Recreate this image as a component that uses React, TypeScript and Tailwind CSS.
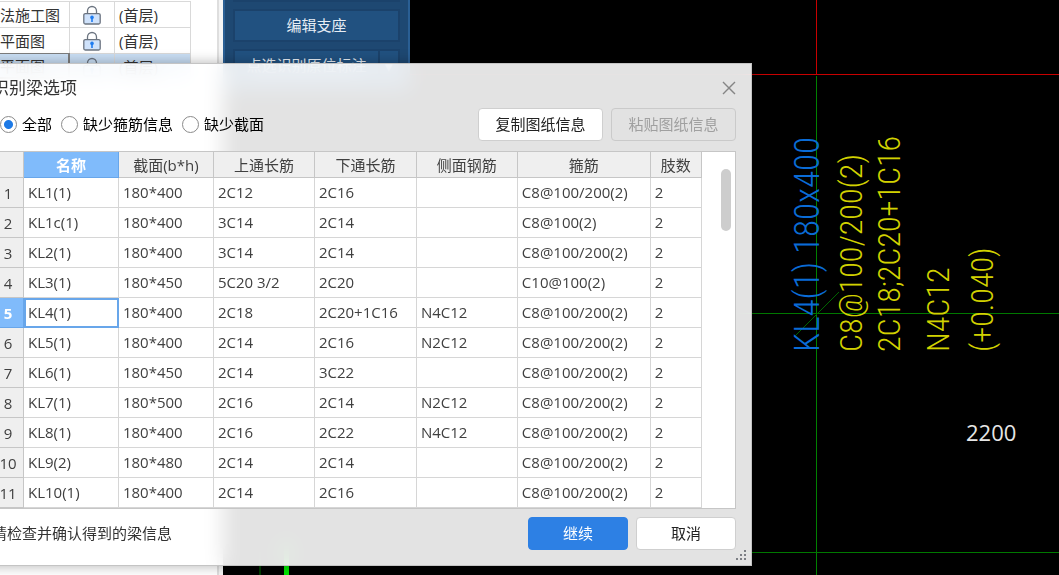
import { useState } from "react";
import clsx from "clsx";

type Beam = {
  name: string;
  section: string;
  top: string;
  bottom: string;
  side: string;
  stirrup: string;
  legs: string;
};

type Note = {
  text: string;
  x: number;
  className: string;
};

const uiFont = "font-['Open_Sans','Noto_Sans_CJK_SC',sans-serif]";

const columns = ["名称", "截面(b*h)", "上通长筋", "下通长筋", "侧面钢筋", "箍筋", "肢数"];

const beam = (
  name: string,
  section: string,
  top: string,
  bottom: string,
  side = "",
  stirrup = "C8@100/200(2)"
): Beam => ({ name, section, top, bottom, side, stirrup, legs: "2" });

const beams: Beam[] = [
  beam("KL1(1)", "180*400", "2C12", "2C16"),
  beam("KL1c(1)", "180*400", "3C14", "2C14", "", "C8@100(2)"),
  beam("KL2(1)", "180*400", "3C14", "2C14"),
  beam("KL3(1)", "180*450", "5C20 3/2", "2C20", "", "C10@100(2)"),
  beam("KL4(1)", "180*400", "2C18", "2C20+1C16", "N4C12"),
  beam("KL5(1)", "180*400", "2C14", "2C16", "N2C12"),
  beam("KL6(1)", "180*450", "2C14", "3C22"),
  beam("KL7(1)", "180*500", "2C16", "2C14", "N2C12"),
  beam("KL8(1)", "180*400", "2C16", "2C22", "N4C12"),
  beam("KL9(2)", "180*480", "2C14", "2C14"),
  beam("KL10(1)", "180*400", "2C14", "2C16"),
];

const filters = ["全部", "缺少箍筋信息", "缺少截面"];

const drawings = ["法施工图", "平面图", "平面图"];

// x is the baseline of each vertical note
const notes: Note[] = [
  { text: "KL4(1) 180x400", x: 596, className: "fill-[#0a6cd6] text-[35px]" },
  { text: "C8@100/200(2)", x: 639, className: "fill-[#d2d200] text-[32px]" },
  { text: "2C18;2C20+1C16", x: 677, className: "fill-[#d2d200] text-[32px]" },
  { text: "N4C12", x: 726, className: "fill-[#d2d200] text-[32px]" },
  { text: "(+0.040)", x: 770, className: "fill-[#d2d200] text-[32px]" },
];

function LockIcon() {
  return (
    <svg width="18" height="20" viewBox="0 0 18 20" className="mx-auto block">
      <path
        d="M4.5 9V6a4.5 4.5 0 0 1 9 0v3"
        fill="none"
        stroke="#6b7480"
        strokeWidth="1.3"
      />
      <rect
        x="0.8"
        y="8.6"
        width="16.4"
        height="10.4"
        rx="1.5"
        fill="#cfe2fb"
        stroke="#6b7480"
        strokeWidth="1.3"
      />
      <circle cx="9" cy="12.4" r="1.8" fill="#1f7cf0" />
      <rect x="8.2" y="13" width="1.6" height="4" fill="#1f7cf0" />
    </svg>
  );
}

function DrawingPanel() {
  return (
    <aside className="flex w-[223px] shrink-0 flex-col bg-[#f4f4f4] pr-1">
      <div className="flex-1 border-r-2 border-[#dedede] bg-white pt-px">
        <table className="w-[191px] table-fixed border-separate border-spacing-0 text-[15px] leading-5 text-[#333]">
          <colgroup>
            <col className="w-[70px]" />
            <col className="w-[45px]" />
            <col className="w-[76px]" />
          </colgroup>
          <tbody>
            {drawings.map((name, i) => {
              const active = i === 2;
              return (
                <tr key={i} className={clsx("h-[26px]", active && "bg-[#c9def4]")}>
                  <td
                    className={clsx(
                      "whitespace-nowrap border-t p-0",
                      active
                        ? "border-2 border-l-0 border-[#7d7d7d]"
                        : "border-r border-[#d9d9d9]"
                    )}
                  >
                    {name}
                  </td>
                  <td className="border-r border-t border-[#d9d9d9] p-0">
                    <LockIcon />
                  </td>
                  <td className="border-r border-t border-[#d9d9d9] p-0 pl-1">
                    (首层)
                  </td>
                </tr>
              );
            })}
          </tbody>
        </table>
      </div>
    </aside>
  );
}

function ToolMenu() {
  const button =
    "h-[33px] shrink-0 border-2 border-[#1b426b] bg-[#215180] text-[15px] text-[#e6edf5]";
  return (
    <div className="absolute left-0 top-0 flex h-[91px] w-[187px] flex-col justify-end gap-[7px] overflow-hidden border-x-2 border-[#2a5f94] bg-[#1e4872] px-2 pb-[9px]">
      <div className="flex shrink-0">
        <button className={clsx(button, "flex-1")} aria-label="识别梁" />
        <button className={clsx(button, "w-5 border-l-0")} aria-label="更多" />
      </div>
      <button className={button}>编辑支座</button>
      <div className="flex shrink-0">
        <button className={clsx(button, "flex-1")}>点选识别原位标注</button>
        <button className={clsx(button, "w-5 border-l-0 text-xs")}>▾</button>
      </div>
    </div>
  );
}

function CadCanvas() {
  return (
    <svg className="absolute inset-0 h-full w-full">
      <g shapeRendering="crispEdges">
        <line x1="593.5" y1="0" x2="593.5" y2="75" stroke="#c80000" />
        <line x1="0" y1="74.5" x2="100%" y2="74.5" stroke="#c80000" />
        <line x1="593.5" y1="76" x2="593.5" y2="100%" stroke="#008000" />
        <line x1="0" y1="313.5" x2="100%" y2="313.5" stroke="#007800" />
        <line x1="500" y1="552.5" x2="100%" y2="552.5" stroke="#007800" />
        <rect x="36" y="540" width="2" height="100%" fill="#003c00" />
        <rect x="61" y="540" width="5" height="100%" fill="#00e600" />
      </g>
      <line x1="571" y1="337" x2="616" y2="292" stroke="#006400" />
      {notes.map((note) => (
        <text
          key={note.text}
          transform={`translate(${note.x} 352) rotate(-90)`}
          className={clsx(
            "font-['Roboto_Condensed','Liberation_Sans_Narrow',Roboto,sans-serif] font-light",
            note.className
          )}
        >
          {note.text}
        </text>
      ))}
      <text x="743" y="441" className="fill-[#e6e6e6] text-[22px]">
        2200
      </text>
    </svg>
  );
}

function BeamTable() {
  return (
    <div className="flex border border-[#c6c6c6] bg-white">
      <table className="flex-1 table-fixed border-separate border-spacing-0 whitespace-nowrap text-[15px] leading-5 text-[#404040]">
        <colgroup>
          <col className="w-[31px]" />
          <col className="w-[95px]" />
          <col className="w-[95px]" />
          <col className="w-[101px]" />
          <col className="w-[102px]" />
          <col className="w-[101px]" />
          <col className="w-[133px]" />
          <col className="w-[51px]" />
        </colgroup>
        <thead>
          <tr className="h-[26px]">
            <td className="border-b border-r border-[#c6c6c6] bg-[#efefef]" />
            {columns.map((label, i) => (
              <th
                key={label}
                className={clsx(
                  "border-b border-r p-0",
                  i === 0
                    ? "border-[#68a6ea] bg-[#80bbfb] font-semibold text-white"
                    : "border-[#c6c6c6] bg-[#efefef] font-normal"
                )}
              >
                {label}
              </th>
            ))}
          </tr>
        </thead>
        <tbody>
          {beams.map((row, i) => {
            const active = i === 4;
            return (
              <tr key={row.name} className="h-[30px]">
                <th
                  className={clsx(
                    "border-b border-r p-0",
                    active
                      ? "border-[#68a6ea] bg-[#80bbfb] font-bold text-white"
                      : "border-[#c6c6c6] bg-[#efefef] font-normal"
                  )}
                >
                  {i + 1}
                </th>
                {Object.values(row).map((value, j) => (
                  <td
                    key={j}
                    className={clsx(
                      "border-b border-r border-[#d6d6d6] p-0 pb-0.5 pl-1",
                      active && j === 0 && "outline-2 -outline-offset-2 outline-[#68a6ea]"
                    )}
                  >
                    {value}
                  </td>
                ))}
              </tr>
            );
          })}
        </tbody>
      </table>
      <div className="w-[33px] shrink-0 pr-1 pt-[17px]">
        <div className="ml-auto h-[62px] w-2.5 rounded-full bg-[#cdcdcd]" />
      </div>
    </div>
  );
}

function BeamDialog() {
  const [filter, setFilter] = useState(filters[0]);
  const button = "h-[33px] rounded border text-[15px]";

  return (
    <div
      role="dialog"
      aria-labelledby="dialog-title"
      className="absolute -left-4 right-[29%] top-[63px] border border-[#c4c4c4] bg-white/89 pb-[15px] pl-[7px] pr-[15px] shadow-[0_0_12px_rgba(0,0,0,0.3)] backdrop-blur-[10px]"
    >
      <header className="flex h-11 items-center justify-between pt-1">
        <h1 id="dialog-title" className="text-[17px] text-[#333]">
          识别梁选项
        </h1>
        <button aria-label="关闭" className="text-[#858585]">
          <svg width="14" height="14" viewBox="0 0 14 14" className="block">
            <path d="M1 1l12 12M13 1L1 13" stroke="currentColor" strokeWidth="1.4" />
          </svg>
        </button>
      </header>

      <div className="flex items-center justify-between pl-2">
        <div className="flex gap-[9px]">
          {filters.map((label) => (
            <label
              key={label}
              className="flex items-center gap-[5px] text-[15px] text-black"
            >
              <input
                type="radio"
                name="filter"
                checked={filter === label}
                onChange={() => setFilter(label)}
                className="size-[17px] appearance-none rounded-full border border-[#8a8a8a] bg-white checked:bg-[radial-gradient(circle,#1e7ae6_4px,white_5px)]"
              />
              {label}
            </label>
          ))}
        </div>
        <div className="flex gap-2">
          <button className={clsx(button, "w-[125px] border-[#cfcfcf] bg-white text-[#222]")}>
            复制图纸信息
          </button>
          <button
            disabled
            className={clsx(button, "w-[125px] border-[#cacaca] bg-[#e2e2e2] text-[#a0a0a0]")}
          >
            粘贴图纸信息
          </button>
        </div>
      </div>

      <div className="mt-2.5">
        <BeamTable />
      </div>

      <footer className="mt-2 flex items-center gap-2">
        <p className="flex-1 text-[15px] text-[#333]">请检查并确认得到的梁信息</p>
        <button className={clsx(button, "w-[100px] border-[#2d80e4] bg-[#2d80e4] text-white")}>
          继续
        </button>
        <button className={clsx(button, "w-[100px] border-[#cfcfcf] bg-white text-[#222]")}>
          取消
        </button>
      </footer>

      <svg width="11" height="11" className="absolute bottom-1 right-1" fill="#7c7f84">
        <path d="M8 0h2v2h-2zM4 4h2v2h-2zM8 4h2v2h-2zM0 8h2v2h-2zM4 8h2v2h-2zM8 8h2v2h-2z" />
      </svg>
    </div>
  );
}

export default function App() {
  return (
    <div className={clsx("relative flex h-screen overflow-hidden bg-black", uiFont)}>
      <DrawingPanel />
      <main className="relative flex-1">
        <CadCanvas />
        <ToolMenu />
      </main>
      <BeamDialog />
    </div>
  );
}
